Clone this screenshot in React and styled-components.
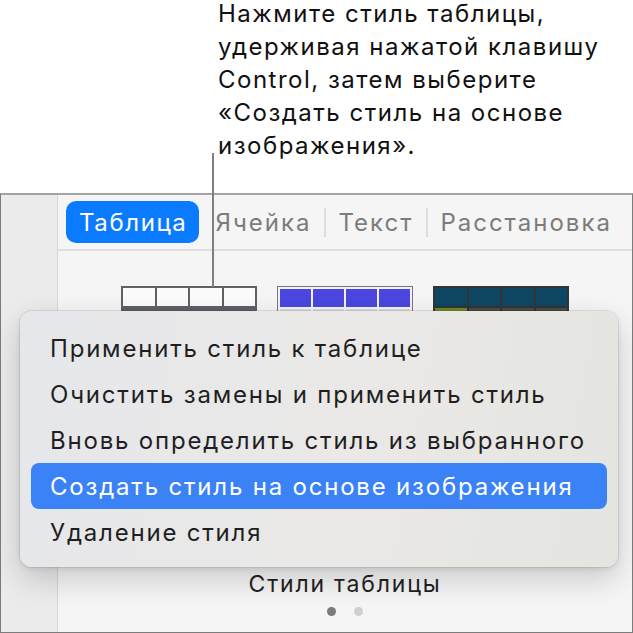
import React from "react";
import styled, { createGlobalStyle } from "styled-components";

const GlobalStyle = createGlobalStyle`
  html, body {
    margin: 0;
    padding: 0;
    background: #ffffff;
  }
  body {
    font-family: Inter, "Noto Sans", sans-serif;
    -webkit-font-smoothing: antialiased;
  }
`;

const tabs = ["Ячейка", "Текст", "Расстановка"];

const menuItems = [
  "Применить стиль к таблице",
  "Очистить замены и применить стиль",
  "Вновь определить стиль из выбранного",
  "Создать стиль на основе изображения",
  "Удаление стиля",
];

const thumbs = [{ kind: "plain" }, { kind: "blue" }, { kind: "teal" }];

const App = () => {
  return (
    <StyledPage>
      <GlobalStyle />
      <Callout>
        Нажмите стиль таблицы,
        <br />
        удерживая нажатой клавишу
        <br />
        Control, затем выберите
        <br />
        «Создать стиль на основе
        <br />
        изображения».
      </Callout>
      <Leader />

      <Window>
        <Sidebar />
        <Main>
          <TabBar>
            <Pill>Таблица</Pill>
            {tabs.map((t, i) => (
              <React.Fragment key={t}>
                {i > 0 && <TabDivider />}
                <Tab>{t}</Tab>
              </React.Fragment>
            ))}
          </TabBar>

          <Content>
            <ThumbRow>
              {thumbs.map((t) => (
                <Thumb key={t.kind} $kind={t.kind}>
                  {[0, 1, 2, 3].map((c) => (
                    <Cell key={c} $kind={t.kind} />
                  ))}
                  {[0, 1, 2, 3].map((c) => (
                    <BodyCell key={c} $kind={t.kind} $first={c === 0} />
                  ))}
                </Thumb>
              ))}
            </ThumbRow>

            <Caption>Стили таблицы</Caption>
            <Dots>
              <Dot $active />
              <Dot />
            </Dots>
          </Content>
        </Main>
      </Window>

      <Menu>
        {menuItems.map((m, i) => (
          <MenuItem key={m} $active={i === 3}>
            {m}
          </MenuItem>
        ))}
      </Menu>
    </StyledPage>
  );
};

export default App;

const StyledPage = styled.div`
  position: relative;
  width: 633px;
  height: 633px;
  overflow: hidden;
  background: #ffffff;
`;

const Callout = styled.div`
  height: 193px;
  box-sizing: border-box;
  padding: 0 0 0 218px;
  margin-top: -3px;
  margin-bottom: 3px;
  font-size: 24px;
  line-height: 33px;
  letter-spacing: 1.5px;
  color: #111111;
  white-space: nowrap;
`;

const Leader = styled.div`
  position: absolute;
  left: 212px;
  top: 153px;
  width: 2px;
  height: 134px;
  background: #7e7e7e;
  z-index: 2;
`;

const Window = styled.div`
  display: grid;
  grid-template-columns: 57px 1fr;
  height: 440px;
  box-sizing: border-box;
  border-top: 2px solid #a3a3a3;
  border-left: 1px solid #7c7c7c;
  border-right: 1px solid #7c7c7c;
  border-bottom: 1px solid #7c7c7c;
`;

const Sidebar = styled.div`
  background: #ebebeb;
  border-right: 1px solid #d6d6d6;
`;

const Main = styled.div`
  display: flex;
  flex-direction: column;
  background: #f5f5f5;
  min-width: 0;
`;

const TabBar = styled.div`
  display: flex;
  align-items: center;
  height: 54px;
  padding-left: 8px;
  border-bottom: 2px solid #dedede;
  font-size: 24px;
  letter-spacing: 1.6px;
  white-space: nowrap;
`;

const Pill = styled.div`
  display: flex;
  align-items: center;
  height: 42px;
  padding: 0 12px 0 13px;
  margin-right: 16px;
  border-radius: 10px;
  background: #0a7bff;
  color: #ffffff;
`;

const Tab = styled.div`
  color: #7c7c7c;
  letter-spacing: 2px;
`;

const TabDivider = styled.div`
  width: 2px;
  height: 29px;
  margin: 0 12px 0 13px;
  background: #dddddd;
`;

const Content = styled.div`
  flex: 1;
  display: flex;
  flex-direction: column;
  align-items: center;
  padding: 35px 0 16px;
`;

const ThumbRow = styled.div`
  display: flex;
  gap: 20px;
`;

const thumbColors = {
  plain: { frame: "#5e6166", cell: "#fbfbfb", body: "#5e6166" },
  blue: { frame: "#f2f2f8", cell: "#4a46df", body: "#dcdcdc" },
  teal: { frame: "#343434", cell: "#0e4664", body: "#4a4a4a" },
};

const Thumb = styled.div`
  display: grid;
  grid-template-columns: repeat(4, 1fr);
  grid-template-rows: 18px 18px;
  gap: 2px;
  width: 136px;
  box-sizing: border-box;
  padding: 2px;
  background: ${(p) => thumbColors[p.$kind].frame};
  border: ${(p) => (p.$kind === "blue" ? "1px solid #77777f" : "none")};
`;

const Cell = styled.div`
  background: ${(p) => thumbColors[p.$kind].cell};
`;

const BodyCell = styled.div`
  background: ${(p) =>
    p.$kind === "teal" && p.$first ? "#6b8a2c" : thumbColors[p.$kind].body};
`;

const Caption = styled.div`
  margin-top: auto;
  font-size: 23px;
  line-height: 28px;
  letter-spacing: 1.8px;
  color: #222222;
`;

const Dots = styled.div`
  display: flex;
  gap: 18px;
  margin-top: 9px;
`;

const Dot = styled.span`
  width: 9px;
  height: 9px;
  border-radius: 50%;
  background: ${(p) => (p.$active ? "#7b7b7b" : "#cfcfcf")};
`;

const Menu = styled.div`
  position: absolute;
  left: 20px;
  top: 311px;
  width: 598px;
  height: 256px;
  box-sizing: border-box;
  padding: 14px 11px 12px;
  border-radius: 12px;
  background: linear-gradient(100deg, #e6e7eb 0%, #eae9e7 55%, #e4e4e0 100%);
  box-shadow: 0 0 0 1px rgba(0, 0, 0, 0.08), 0 12px 30px rgba(0, 0, 0, 0.18),
    0 2px 6px rgba(0, 0, 0, 0.08);
  z-index: 3;
`;

const MenuItem = styled.div`
  display: flex;
  align-items: center;
  height: 46px;
  padding-left: 19px;
  border-radius: 8px;
  font-size: 24px;
  letter-spacing: 1.8px;
  white-space: nowrap;
  color: ${(p) => (p.$active ? "#ffffff" : "#1f1f1f")};
  background: ${(p) => (p.$active ? "#3a82f6" : "transparent")};
`;
